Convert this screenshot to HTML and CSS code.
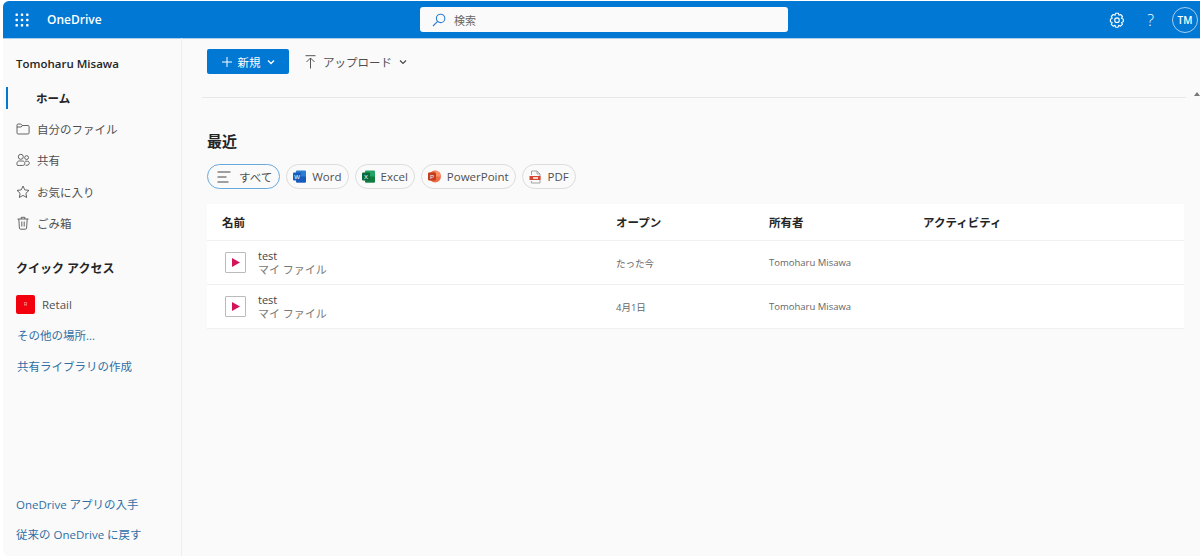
FILE: index.html
```html
<!DOCTYPE html>
<html lang="ja">
<head>
    <title>OneDrive</title>
    <link rel="stylesheet" href="styles.css">
</head>
<body>
    <div class="app">
        <header class="topbar">
            <div class="topbar-left">
                <svg class="waffle" width="14" height="14" viewBox="0 0 14 14" fill="#fff">
                    <rect x="0.5" y="0.5" width="2.4" height="2.4" rx="0.6"/><rect x="5.8" y="0.5" width="2.4" height="2.4" rx="0.6"/><rect x="11.1" y="0.5" width="2.4" height="2.4" rx="0.6"/>
                    <rect x="0.5" y="5.8" width="2.4" height="2.4" rx="0.6"/><rect x="5.8" y="5.8" width="2.4" height="2.4" rx="0.6"/><rect x="11.1" y="5.8" width="2.4" height="2.4" rx="0.6"/>
                    <rect x="0.5" y="11.1" width="2.4" height="2.4" rx="0.6"/><rect x="5.8" y="11.1" width="2.4" height="2.4" rx="0.6"/><rect x="11.1" y="11.1" width="2.4" height="2.4" rx="0.6"/>
                </svg>
                <span class="brand">OneDrive</span>
            </div>
            <div class="search">
                <svg width="14" height="14" viewBox="0 0 14 14" fill="none" stroke="#2b7cd3" stroke-width="1.1">
                    <circle cx="8.6" cy="5.4" r="4.2"/><path d="M5.6 8.4L1 13"/>
                </svg>
                <span>検索</span>
            </div>
            <div class="topbar-right">
                <svg width="16" height="16" viewBox="0 0 16 16" fill="none" stroke="#fff" stroke-width="1.1">
                    <path d="M6.6 1.2h2.8l.5 2 1.7-.7 1.9 2-1 1.7 1.8 1v2.6l-1.8.6.9 1.9-1.9 1.9-1.8-.9-.6 1.9H6.6l-.5-1.9-1.9.9-1.9-1.9.9-1.9-1.8-.6V7.2l1.8-1-.9-1.7 1.9-2 1.9.7z" stroke-linejoin="round"/>
                    <circle cx="8" cy="8.2" r="2.3"/>
                </svg>
                <span class="help">?</span>
                <span class="avatar">TM</span>
            </div>
        </header>
        <div class="body">
            <nav class="sidebar">
                <div class="user-name">Tomoharu Misawa</div>
                <ul class="nav-list">
                    <li class="nav-item nav-item--active">ホーム</li>
                    <li class="nav-item">
                        <svg width="14" height="14" viewBox="0 0 14 14" fill="none" stroke="#555" stroke-width="0.9"><path d="M1 3.2c0-.7.4-1.2 1.100-1.200h2.700l1.400 1.500h5.800c.7 0 1.100.5 1.100 1.200v6.100c0 .7-.4 1.200-1.100 1.200H2.100C1.400 12 1 11.500 1 10.800z"/><path d="M1 5h4.200l1.200-1.500"/></svg>
                        自分のファイル
                    </li>
                    <li class="nav-item">
                        <svg width="14" height="14" viewBox="0 0 14 14" fill="none" stroke="#555" stroke-width="0.9"><circle cx="4.800" cy="3.800" r="2.500"/><circle cx="10.600" cy="4.600" r="1.900"/><path d="M1 12v-1.800C1 8.800 2 8 3.200 8h3.200C7.800 8 8.800 9 8.800 10.200V11c0 .9-1 1.500-3.800 1.500S1 12.500 1 12z"/><path d="M9.600 12.300c2 0 3.600-.5 3.600-1.500V9.800c0-1-.7-1.600-1.800-1.600H9"/></svg>
                        共有
                    </li>
                    <li class="nav-item">
                        <svg width="14" height="14" viewBox="0 0 14 14" fill="none" stroke="#555" stroke-width="0.9" stroke-linejoin="round"><path d="M7 1l1.800 3.900 4.200.5-3.100 2.900.8 4.200L7 10.400l-3.700 2.100.8-4.200L1 5.400l4.200-.5z"/></svg>
                        お気に入り
                    </li>
                    <li class="nav-item">
                        <svg width="14" height="14" viewBox="0 0 14 14" fill="none" stroke="#555" stroke-width="0.9"><path d="M1.500 3h11M5.200 3V1.300h3.600V3M2.800 3l.6 9c0 .7.500 1.200 1.200 1.200h4.800c.7 0 1.200-.5 1.200-1.200l.6-9M5.800 5.500v5M8.200 5.500v5"/></svg>
                        ごみ箱
                    </li>
                </ul>
                <div class="section-title">クイック アクセス</div>
                <div class="site-item"><span class="site-badge">R</span>Retail</div>
                <a class="side-link side-link--inset">その他の場所...</a>
                <a class="side-link side-link--inset">共有ライブラリの作成</a>
                <div class="sidebar-foot">
                    <a class="side-link">OneDrive アプリの入手</a>
                    <a class="side-link">従来の OneDrive に戻す</a>
                </div>
            </nav>
            <main class="main">
                <div class="toolbar">
                    <button class="btn-new">
                        <svg width="10" height="10" viewBox="0 0 10 10" stroke="#fff" stroke-width="1"><path d="M5 0v10M0 5h10"/></svg>
                        <span>新規</span>
                        <svg width="8" height="6" viewBox="0 0 8 6" fill="none" stroke="#fff" stroke-width="1.300"><path d="M1 1.500l3 3 3-3"/></svg>
                    </button>
                    <div class="btn-upload">
                        <svg width="11" height="14" viewBox="0 0 11 14" fill="none" stroke="#444" stroke-width="0.9"><path d="M0.500 0.700h10M5.500 13.500V3.200M1.500 7l4-4 4 4"/></svg>
                        <span>アップロード</span>
                        <svg width="8" height="6" viewBox="0 0 8 6" fill="none" stroke="#444" stroke-width="1.100"><path d="M1 1.500l3 3 3-3"/></svg>
                    </div>
                </div>
                <h1 class="heading">最近</h1>
                <div class="chips">
                    <div class="chip chip--active">
                        <svg width="14" height="12" viewBox="0 0 14 12" stroke="#444" stroke-width="1"><path d="M0.500 1h13M0.500 6h9M0.500 11h11"/></svg>
                        <span>すべて</span>
                    </div>
                    <div class="chip">
                        <svg width="13" height="13" viewBox="0 0 13 13"><rect x="3" y="0.500" width="10" height="12" rx="1" fill="#2b7cd3"/><rect x="3" y="6.500" width="10" height="6" rx="1" fill="#185abd"/><rect x="0" y="2.500" width="8" height="8" rx="1" fill="#1a5cb8"/><text x="4" y="9" font-size="6" fill="#fff" text-anchor="middle" font-family="Liberation Sans">W</text></svg>
                        <span>Word</span>
                    </div>
                    <div class="chip">
                        <svg width="13" height="13" viewBox="0 0 13 13"><rect x="3" y="0.500" width="10" height="12" rx="1" fill="#21a366"/><rect x="3" y="6.500" width="10" height="6" rx="1" fill="#107c41"/><rect x="0" y="2.500" width="8" height="8" rx="1" fill="#0c6b38"/><text x="4" y="9" font-size="6" fill="#fff" text-anchor="middle" font-family="Liberation Sans">X</text></svg>
                        <span>Excel</span>
                    </div>
                    <div class="chip">
                        <svg width="13" height="13" viewBox="0 0 13 13"><circle cx="7" cy="6.500" r="6" fill="#ed6c47"/><path d="M7 .5a6 6 0 0 1 6 6H7z" fill="#ff8f6b"/><rect x="0" y="2.500" width="8" height="8" rx="1" fill="#c43e1c"/><text x="4" y="9" font-size="6" fill="#fff" text-anchor="middle" font-family="Liberation Sans">P</text></svg>
                        <span>PowerPoint</span>
                    </div>
                    <div class="chip">
                        <svg width="13" height="14" viewBox="0 0 13 14" fill="none"><path d="M2.500 5V1h5.500l3 3v9h-8.500v-2" stroke="#999" stroke-width="0.900"/><path d="M8 1v3h3" stroke="#999" stroke-width="0.800"/><rect x="0.500" y="6" width="11" height="4" fill="#d9442f"/><path d="M4 7.200h5v1.600H4z" fill="#fff"/></svg>
                        <span>PDF</span>
                    </div>
                </div>
                <div class="file-table">
                    <div class="file-row file-row--head">
                        <div>名前</div>
                        <div>オープン</div>
                        <div>所有者</div>
                        <div>アクティビティ</div>
                    </div>
                    <div class="file-row">
                        <div class="file-name">
                            <span class="file-icon"><svg width="8" height="9" viewBox="0 0 8 9"><path d="M0 0l8 4.500L0 9z" fill="#d4145a"/></svg></span>
                            <div>
                                <div class="file-title">test</div>
                                <div class="file-path">マイ ファイル</div>
                            </div>
                        </div>
                        <div class="cell-small">たった今</div>
                        <div class="cell-small">Tomoharu Misawa</div>
                        <div></div>
                    </div>
                    <div class="file-row">
                        <div class="file-name">
                            <span class="file-icon"><svg width="8" height="9" viewBox="0 0 8 9"><path d="M0 0l8 4.500L0 9z" fill="#d4145a"/></svg></span>
                            <div>
                                <div class="file-title">test</div>
                                <div class="file-path">マイ ファイル</div>
                            </div>
                        </div>
                        <div class="cell-small">4月1日</div>
                        <div class="cell-small">Tomoharu Misawa</div>
                        <div></div>
                    </div>
                </div>
                <div class="scroll-arrow"></div>
            </main>
        </div>
    </div>
</body>
</html>
```

FILE: styles.css
```css
html, body {
    margin: 0;
    height: 100%;
    background: #fff;
}
body {
    font-family: "Open Sans", "Noto Sans CJK JP", sans-serif;
    font-size: 12px;
    color: #333;
}
.app {
    margin: 1px 0 1px 3px;
    height: 555px;
    display: flex;
    flex-direction: column;
    background: #fafafa;
    border-radius: 6px 0 0 6px;
    overflow: hidden;
}

/* Top bar */
.topbar {
    height: 37px;
    flex: none;
    display: grid;
    grid-template-columns: 417px 368px 1fr;
    align-items: center;
    background: #0078d4;
    box-shadow: 0 1px 0 #a9cdeb;
}
.topbar-left {
    display: flex;
    align-items: center;
    padding-left: 12px;
}
.brand {
    margin-left: 18px;
    color: #fff;
    font-size: 12px;
    font-weight: 600;
}
.search {
    height: 25px;
    display: flex;
    align-items: center;
    gap: 8px;
    padding-left: 12px;
    background: #fafafa;
    border-radius: 3px;
    color: #666;
    font-size: 11px;
}
.topbar-right {
    display: flex;
    align-items: center;
    justify-content: flex-end;
    color: #fff;
}
.help {
    margin-left: 22px;
    font-size: 16px;
    font-weight: 300;
    line-height: 1;
}
.avatar {
    margin-left: 18px;
    margin-right: 2px;
    width: 24px;
    height: 24px;
    border: 1px solid #a9cdeb;
    border-radius: 50%;
    display: flex;
    align-items: center;
    justify-content: center;
    font-size: 10px;
    font-weight: 600;
}

.body {
    flex: 1;
    display: flex;
    min-height: 0;
}

/* Sidebar */
.sidebar {
    width: 179px;
    flex: none;
    box-sizing: border-box;
    display: flex;
    flex-direction: column;
    border-right: 1px solid #eee;
}
.user-name {
    margin: 17px 0 0 13px;
    font-size: 11.5px;
    font-weight: 600;
    line-height: 18px;
    color: #252525;
}
.nav-list {
    list-style: none;
    margin: 9px 0 0;
    padding: 0;
}
.nav-item {
    height: 31.4px;
    display: flex;
    align-items: center;
    gap: 7px;
    padding-left: 13px;
    font-size: 11.5px;
    color: #505050;
}
.nav-item--active {
    position: relative;
    padding-left: 33px;
    font-weight: 700;
    color: #252525;
}
.nav-item--active::before {
    content: "";
    position: absolute;
    left: 3px;
    top: 5px;
    width: 2px;
    height: 22px;
    background: #0078d4;
}
.section-title {
    margin: 21px 0 0 13px;
    font-size: 12px;
    font-weight: 700;
    line-height: 18px;
    color: #252525;
}
.site-item {
    margin: 17px 0 0 13px;
    display: flex;
    align-items: center;
    gap: 7px;
    font-size: 11.5px;
    color: #505050;
}
.site-badge {
    width: 19px;
    height: 19px;
    display: flex;
    align-items: center;
    justify-content: center;
    background: #f3000f;
    border-radius: 2px;
    color: #f8b0b0;
    font-size: 6px;
}
.side-link {
    display: block;
    margin-left: 13px;
    font-size: 11.5px;
    line-height: 16px;
    color: #2f6ea5;
}
.side-link--inset {
    margin: 14px 0 0 14px;
}
.side-link--inset + .side-link--inset {
    margin-top: 15px;
}
.sidebar-foot {
    margin-top: auto;
    padding-bottom: 13px;
    display: flex;
    flex-direction: column;
    gap: 14px;
}

/* Main area */
.main {
    flex: 1;
    position: relative;
    min-width: 0;
}
.toolbar {
    margin: 0 14px 0 20px;
    height: 48px;
    padding: 11px 0 0 5px;
    display: flex;
    align-items: flex-start;
    gap: 16px;
    border-bottom: 1px solid #e8e8e8;
}
.btn-new {
    width: 82px;
    height: 25px;
    display: flex;
    align-items: center;
    justify-content: center;
    gap: 6px;
    padding: 0;
    border: 0;
    border-radius: 2px;
    background: #0078d4;
    color: #fff;
    font-family: inherit;
    font-size: 11.5px;
}
.btn-upload {
    height: 25px;
    display: flex;
    align-items: center;
    gap: 7px;
    font-size: 11.5px;
    color: #505050;
}
.heading {
    margin: 32px 0 0 25px;
    font-size: 15px;
    font-weight: 700;
    line-height: 22px;
    color: #252525;
}
.chips {
    margin: 12px 0 0 25px;
    display: flex;
    gap: 6px;
}
.chip {
    height: 23px;
    display: flex;
    align-items: center;
    gap: 6px;
    padding: 0 6px;
    border: 1px solid #dcdcdc;
    border-radius: 13px;
    font-size: 11.5px;
    color: #505050;
}
.chip--active {
    padding: 0 7px 0 9px;
    gap: 8px;
    border-color: #6aa9dc;
}

/* File list */
.file-table {
    margin: 15px 16px 0 25px;
    background: #fff;
}
.file-row {
    height: 43px;
    display: grid;
    grid-template-columns: 394px 153px 154px 1fr;
    align-items: center;
    padding-left: 15px;
    border-bottom: 1px solid #f0f0f0;
}
.file-row--head {
    height: 36px;
    font-size: 11.5px;
    font-weight: 700;
    color: #252525;
}
.file-name {
    display: flex;
    align-items: center;
    gap: 12px;
    padding-left: 3px;
}
.file-icon {
    width: 19px;
    height: 19px;
    display: flex;
    align-items: center;
    justify-content: center;
    border: 1px solid #bbb;
    border-radius: 1px;
}
.file-title {
    font-size: 11px;
    line-height: 14px;
    color: #444;
}
.file-path {
    font-size: 11px;
    line-height: 14px;
    color: #777;
}
.cell-small {
    font-size: 9.500px;
    color: #666;
}
.scroll-arrow {
    position: absolute;
    right: 0;
    top: 54px;
    border-left: 3px solid transparent;
    border-right: 3px solid transparent;
    border-bottom: 4px solid #777;
}
```
